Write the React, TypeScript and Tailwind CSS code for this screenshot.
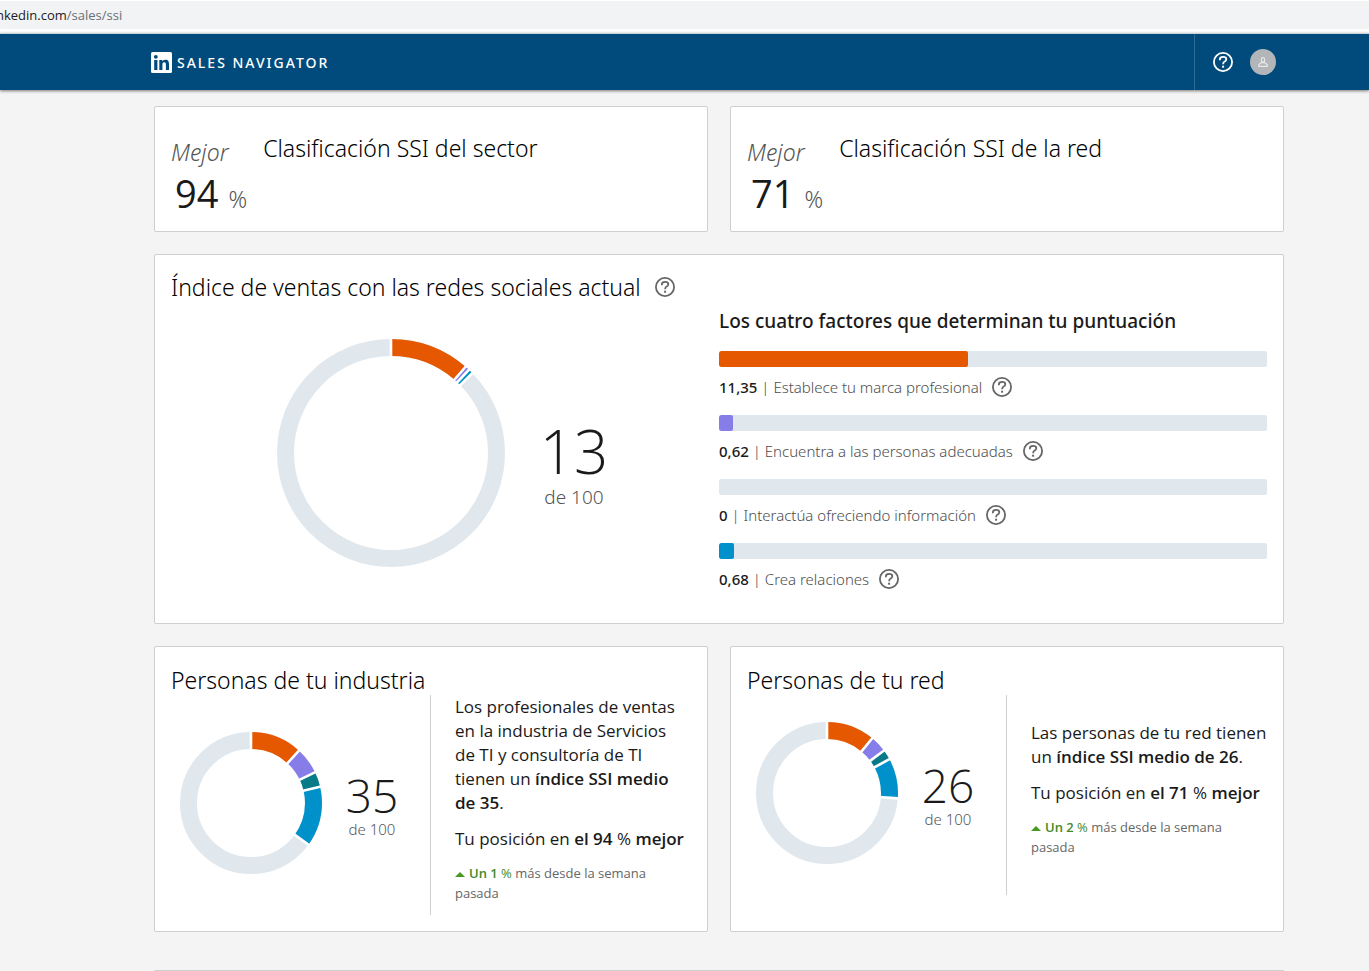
import React from 'react'

type Slice = { value: number; color: string }

const HelpIcon = ({ className = 'text-[#666666]' }: { className?: string }) => (
  <svg viewBox="0 0 24 24" className={`h-6 w-6 ${className}`} fill="currentColor" aria-hidden="true">
    <path d="M12 2a10 10 0 1 0 0 20 10 10 0 0 0 0-20zm0 18.2a8.2 8.2 0 1 1 0-16.4 8.2 8.2 0 0 1 0 16.4z" />
    <path
      d="M8.9 10.2V9.3C8.9 7.7 10 6.9 12.1 6.9S15.3 7.700 15.300 9.200c0 1.100-.5 1.700-1.600 2.300-1 .5-1.500 1-1.500 2.200v.6"
      fill="none"
      stroke="currentColor"
      strokeWidth="1.8"
    />
    <path d="M11.1 15.7h2v2h-2z" />
  </svg>
)

const HelpButton = ({ label }: { label: string }) => (
  <button type="button" aria-label={label} className="shrink-0 cursor-pointer">
    <HelpIcon />
  </button>
)

const Donut = ({ size, slices }: { size: number; slices: Slice[] }) => {
  const c = size / 2
  const r = c - 8.5
  const length = 2 * Math.PI * r
  let total = 0
  const parts = slices.map((slice) => {
    const start = total
    total += slice.value
    return { ...slice, start }
  })
  const edges = [...parts.map((p) => p.start), total]
  return (
    <svg width={size} height={size} viewBox={`0 0 ${size} ${size}`} className="shrink-0" aria-hidden="true">
      <g transform={`rotate(-90 ${c} ${c})`} fill="none">
        <circle cx={c} cy={c} r={r} stroke="#e1e8ed" strokeWidth="17" />
        {parts.map((p) => (
          <circle
            key={p.color}
            cx={c}
            cy={c}
            r={r}
            stroke={p.color}
            strokeWidth="17"
            strokeDasharray={`${(p.value / 100) * length} ${length}`}
            strokeDashoffset={-(p.start / 100) * length}
          />
        ))}
        {edges.map((edge, i) => (
          <line
            key={i}
            x1={c + r - 10}
            y1={c}
            x2={size + 1}
            y2={c}
            stroke="#ffffff"
            strokeWidth="2.6"
            transform={`rotate(${edge * 3.6} ${c} ${c})`}
          />
        ))}
      </g>
    </svg>
  )
}

const Card = ({ className = '', children }: { className?: string; children: React.ReactNode }) => (
  <section className={`rounded-xs border border-[#cdcfd2] bg-white px-4 ${className}`}>{children}</section>
)

const Title = ({ children }: { children: React.ReactNode }) => (
  <h2 className="font-['Noto_Sans',sans-serif] text-[23px] leading-[34px] font-light text-black">{children}</h2>
)

const RankCard = ({ value, title }: { value: number; title: string }) => (
  <Card className="flex gap-4 pt-6 pb-4">
    <div>
      <p className="font-['Noto_Sans',sans-serif] text-[23px] leading-[42px] font-light text-[#555555] italic">Mejor</p>
      <p className="flex h-[42px] items-baseline gap-[10px] pl-1">
        <span className="text-[38px] leading-10">{value}</span>
        <span className="font-['Noto_Sans',sans-serif] text-[23px] leading-6 font-light text-[#555555]">%</span>
      </p>
    </div>
    <Title>{title}</Title>
  </Card>
)

const factors = [
  { score: 11.35, text: '11,35', label: 'Establece tu marca profesional', color: '#e65800' },
  { score: 0.62, text: '0,62', label: 'Encuentra a las personas adecuadas', color: '#867de8' },
  { score: 0, text: '0', label: 'Interactúa ofreciendo información', color: '#097a88' },
  { score: 0.68, text: '0,68', label: 'Crea relaciones', color: '#0091ca' },
]

const FactorRow = ({ score, text, label, color }: (typeof factors)[number]) => (
  <li className="h-16">
    <div className="h-4 overflow-hidden rounded-xs bg-[#e1e8ed]">
      <div className="h-4 rounded-xs" style={{ width: `${(score / 25) * 100}%`, backgroundColor: color }} />
    </div>
    <div className="flex items-center gap-2 pt-2">
      <p className="font-['Noto_Sans',sans-serif] text-[15px] leading-6 font-light text-[#4d4d4d]">
        <span className="font-medium text-[#1a1a1a]">{text}</span> | {label}
      </p>
      <HelpButton label={`Ayuda: ${label}`} />
    </div>
  </li>
)

const PeopleCard = ({
  title,
  score,
  slices,
  rank,
  change,
  children,
}: {
  title: string
  score: number
  slices: Slice[]
  rank: number
  change: number
  children: React.ReactNode
}) => (
  <Card className="pt-4 pb-4">
    <Title>{title}</Title>
    <div className="-mt-0.5 flex min-h-[200px]">
      <div className="flex w-[260px] shrink-0 items-center gap-5 border-r border-[#cdcfd2] pb-1 pl-[9px]">
        <Donut size={142} slices={slices} />
        <div className="w-[60px] pt-1 text-center">
          <p className="text-[46px] leading-12 font-light">{score}</p>
          <p className="font-['Noto_Sans',sans-serif] text-[15px] leading-5 font-light text-[#555555]">de 100</p>
        </div>
      </div>
      <div className="flex min-w-0 flex-1 flex-col justify-center pl-6">
        <p className="mb-3 text-[17px] leading-6">{children}</p>
        <p className="mb-3 text-[17px] leading-6">
          Tu posición en <b className="font-semibold">el {rank}</b> % <b className="font-semibold">mejor</b>
        </p>
        <p className="mb-3 text-[13px] leading-5 text-[#666666]">
          <svg viewBox="0 0 10 5" className="mr-1 inline h-[5px] w-[10px]" fill="#469a1f" aria-hidden="true">
            <path d="M0 5 5 0l5 5z" />
          </svg>
          <span className="text-[#44892a]">
            <b className="font-semibold">Un {change}</b> %
          </span>{' '}
          más desde la semana pasada
        </p>
      </div>
    </div>
  </Card>
)

const Header = () => (
  <header className="relative border-t border-[#c9d3d9] bg-[#004b7c] pr-[93px] pl-[151px] text-white shadow-[0_1px_3px_rgba(0,0,0,0.5)]">
    <div className="flex h-14 items-center justify-between">
      <a href="#" className="flex items-center gap-[5px]">
        <svg viewBox="0 0 21 21" className="h-[21px] w-[21px]" aria-hidden="true">
          <rect width="21" height="21" rx="1.5" fill="#ffffff" />
          <g fill="#004b7c">
            <circle cx="4.8" cy="4.8" r="1.9" />
            <rect x="3.2" y="8" width="3.2" height="10" />
            <path d="M8.3 8h3v1.4c.5-.9 1.6-1.7 3.1-1.7 3 0 3.6 2 3.600 4.600V18h-3.100v-5c0-1.300-.1-2.700-1.700-2.700s-1.800 1.300-1.800 2.600V18H8.300z" />
          </g>
        </svg>
        <span className="font-['Noto_Sans',sans-serif] text-[14px] font-medium tracking-[2px]">SALES NAVIGATOR</span>
      </a>
      <div className="flex h-14 items-center gap-[15px] border-l border-[#2f6c94] pl-4">
        <button type="button" aria-label="Ayuda" className="cursor-pointer">
          <HelpIcon className="text-white" />
        </button>
        <button
          type="button"
          aria-label="Cuenta"
          className="flex h-[26px] w-[26px] cursor-pointer items-center justify-center rounded-full bg-[#b3b6b9]"
        >
          <svg viewBox="0 0 10 10" className="h-[10px] w-[10px]" fill="none" stroke="#e6e8ea" strokeWidth="1.2" aria-hidden="true">
            <rect x="3.4" y=".6" width="3.2" height="4.4" rx="1.6" />
            <path d="M3.6 5.6h2.8L9.2 7.600v1.800H.8V7.600z" />
          </svg>
        </button>
      </div>
    </div>
  </header>
)

const App = () => {
  return (
    <div className="min-h-screen bg-[#f4f4f4] font-['Open_Sans','Noto_Sans',sans-serif] text-[#1a1a1a]">
      <div className="flex h-[33px] flex-col bg-white pt-px pb-1">
        <div className="flex flex-1 items-center overflow-hidden bg-[#f1f3f4] text-[13px] leading-5 text-[#202124]">
          <p className="-ml-1">
            nkedin.com<span className="text-[#6b6f74]">/sales/ssi</span>
          </p>
        </div>
      </div>
      <Header />
      <main className="flex flex-col gap-[22px] pt-4 pr-[85px] pl-[154px]">
        <div className="grid grid-cols-2 gap-[22px]">
          <RankCard value={94} title="Clasificación SSI del sector" />
          <RankCard value={71} title="Clasificación SSI de la red" />
        </div>

        <Card className="grid grid-cols-2 pt-4 pb-4">
          <div>
            <div className="flex h-8 items-center gap-3">
              <Title>Índice de ventas con las redes sociales actual</Title>
              <HelpButton label="Ayuda: índice de ventas" />
            </div>
            <div className="flex items-center justify-center gap-[30px] pt-9">
              <Donut
                size={228}
                slices={factors.filter((f) => f.score > 0).map((f) => ({ value: f.score, color: f.color }))}
              />
              <div className="w-[78px] pt-6 text-center">
                <p className="text-[60px] leading-16 font-light">13</p>
                <p className="font-['Noto_Sans',sans-serif] text-[19px] leading-7 font-light text-[#555555]">de 100</p>
              </div>
            </div>
          </div>
          <div className="pt-[34px]">
            <h3 className="pb-[14px] font-['Noto_Sans',sans-serif] text-[19px] leading-8 font-medium">
              Los cuatro factores que determinan tu puntuación
            </h3>
            <ul>
              {factors.map((f) => (
                <FactorRow key={f.label} {...f} />
              ))}
            </ul>
          </div>
        </Card>

        <div className="grid grid-cols-2 gap-[22px]">
          <PeopleCard
            title="Personas de tu industria"
            score={35}
            rank={94}
            change={1}
            slices={[
              { value: 11.8, color: '#e65800' },
              { value: 6.1, color: '#867de8' },
              { value: 3.4, color: '#097a88' },
              { value: 13.7, color: '#0091ca' },
            ]}
          >
            Los profesionales de ventas en la industria de Servicios de&nbsp;TI y consultoría de&nbsp;TI tienen un{' '}
            <b className="font-semibold">índice SSI medio de&nbsp;35</b>.
          </PeopleCard>
          <PeopleCard
            title="Personas de tu red"
            score={26}
            rank={71}
            change={2}
            slices={[
              { value: 11, color: '#e65800' },
              { value: 3.8, color: '#867de8' },
              { value: 2.3, color: '#097a88' },
              { value: 9.1, color: '#0091ca' },
            ]}
          >
            Las personas de tu red tienen un <b className="font-semibold">índice SSI medio de&nbsp;26</b>.
          </PeopleCard>
        </div>

        <div className="mt-4 h-px rounded-t-xs bg-[#cdcfd2]" />
      </main>
    </div>
  )
}

export default App
